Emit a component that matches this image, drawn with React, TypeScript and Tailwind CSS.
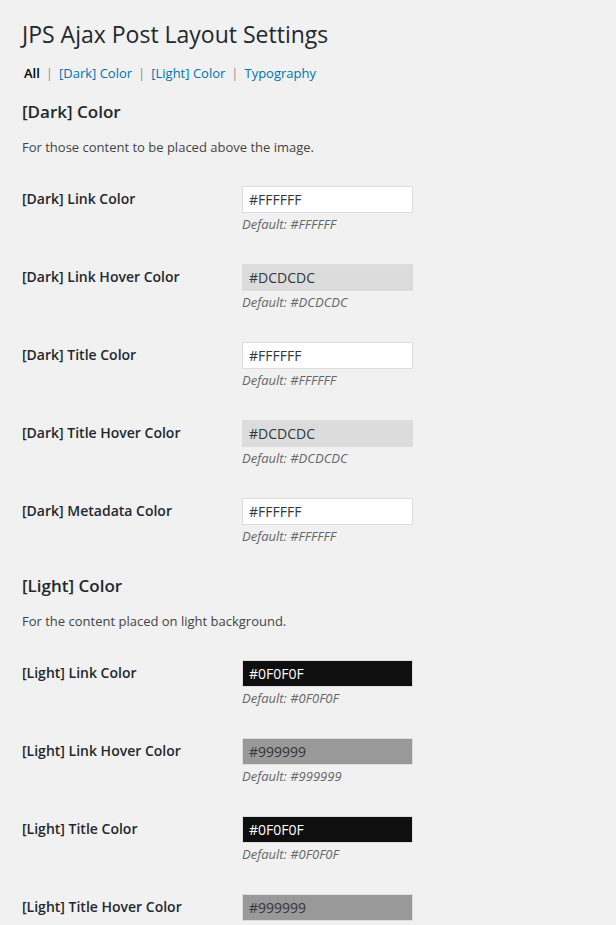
import React from "react";

type Field = { label: string; value: string; bg: string; fg: string };

const dark: Field[] = [
  { label: "[Dark] Link Color", value: "#FFFFFF", bg: "bg-white", fg: "text-[#32373c]" },
  { label: "[Dark] Link Hover Color", value: "#DCDCDC", bg: "bg-[#dcdcdc]", fg: "text-[#32373c]" },
  { label: "[Dark] Title Color", value: "#FFFFFF", bg: "bg-white", fg: "text-[#32373c]" },
  { label: "[Dark] Title Hover Color", value: "#DCDCDC", bg: "bg-[#dcdcdc]", fg: "text-[#32373c]" },
  { label: "[Dark] Metadata Color", value: "#FFFFFF", bg: "bg-white", fg: "text-[#32373c]" },
];

const light: Field[] = [
  { label: "[Light] Link Color", value: "#0F0F0F", bg: "bg-[#0f0f0f]", fg: "text-white" },
  { label: "[Light] Link Hover Color", value: "#999999", bg: "bg-[#999999]", fg: "text-[#32373c]" },
  { label: "[Light] Title Color", value: "#0F0F0F", bg: "bg-[#0f0f0f]", fg: "text-white" },
  { label: "[Light] Title Hover Color", value: "#999999", bg: "bg-[#999999]", fg: "text-[#32373c]" },
];

function Row({ f }: { f: Field }) {
  return (
    <div className="flex h-[78px]">
      <div className="w-[220px] pt-[19px] text-[14px] leading-[18px] font-semibold text-[#23282d]">
        {f.label}
      </div>
      <div className="pt-[15px]">
        <div
          className={`w-[171px] h-[27px] border border-[#dddddd] ${f.bg} ${f.fg} px-[6px] text-[14px] leading-[25px]`}
        >
          {f.value}
        </div>
        <div className="mt-[2px] text-[13px] leading-[18px] italic text-[#666666]">
          Default: {f.value}
        </div>
      </div>
    </div>
  );
}

function Section({ title, desc, fields }: { title: string; desc: string; fields: Field[] }) {
  return (
    <div className="flex flex-col">
      <h2 className="mt-[14px] text-[17px] leading-[22px] font-semibold text-[#23282d]">{title}</h2>
      <p className="mt-[14px] text-[13px] leading-[20px] text-[#444444]">{desc}</p>
      <div className="mt-[14px] flex flex-col">
        {fields.map((f) => (
          <Row key={f.label} f={f} />
        ))}
      </div>
    </div>
  );
}

export default function App() {
  return (
    <div
      className="min-h-screen bg-[#f1f1f1] pl-[22px] pt-[20px] text-[#444444]"
      style={{ fontFamily: '"Open Sans", "Noto Sans", sans-serif' }}
    >
      <h1 className="text-[23px] leading-[29px] font-normal text-[#23282d]">
        JPS Ajax Post Layout Settings
      </h1>
      <div className="mt-[14px] text-[13px] leading-[20px] text-[#8c8f94] pl-[2px]">
        <span className="font-semibold text-black">All</span>
        <span className="px-[6px]">|</span>
        <span className="text-[#0073aa]">[Dark] Color</span>
        <span className="px-[6px]">|</span>
        <span className="text-[#0073aa]">[Light] Color</span>
        <span className="px-[6px]">|</span>
        <span className="text-[#0073aa]">Typography</span>
      </div>
      <div className="mt-[4px]">
        <Section
          title="[Dark] Color"
          desc="For those content to be placed above the image."
          fields={dark}
        />
        <Section
          title="[Light] Color"
          desc="For the content placed on light background."
          fields={light}
        />
      </div>
    </div>
  );
}
